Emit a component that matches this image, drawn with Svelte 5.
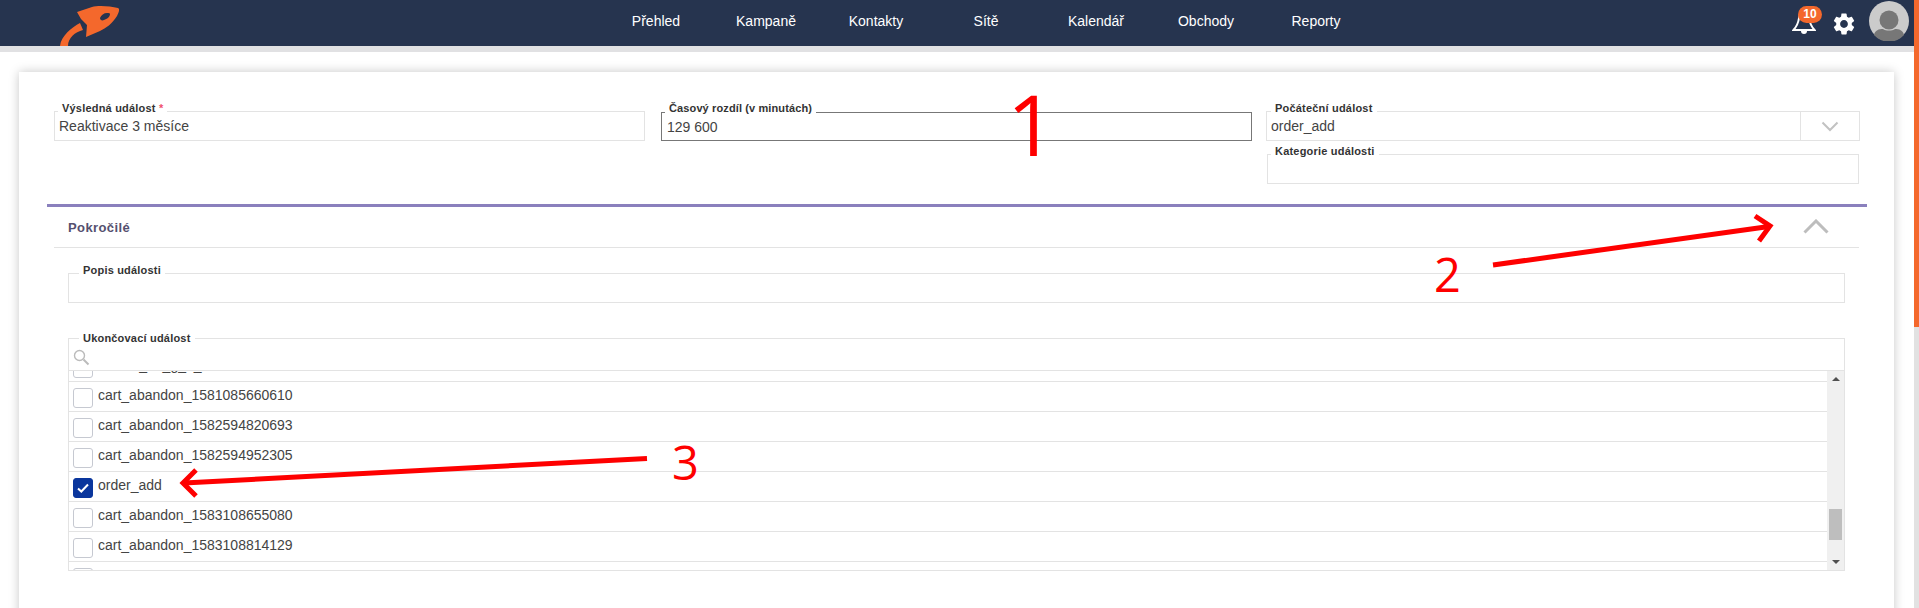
<script>
  const menu = ['Přehled', 'Kampaně', 'Kontakty', 'Sítě', 'Kalendář', 'Obchody', 'Reporty'];

  // first and last rows are scrolled mostly out of view
  const events = [
    { name: 'basket_02_g_2_' },
    { name: 'cart_abandon_1581085660610' },
    { name: 'cart_abandon_1582594820693' },
    { name: 'cart_abandon_1582594952305' },
    { name: 'order_add', checked: true },
    { name: 'cart_abandon_1583108655080' },
    { name: 'cart_abandon_1583108814129' },
    { name: '' }
  ];
</script>

<div class="page">
  <div class="main">
    <header class="nav">
      <a class="logo" href="#top" aria-label="Logo">
        <svg width="60" height="46" viewBox="0 0 60 46">
          <path fill="#f4682c" fill-rule="evenodd" d="M17 12 L32 7 C38 5 50 6 58 8 C60 9 59 12 57 16 C52 24 46 28 40 31 L26 37 L27 25 L21 19 Z M47 13 C44 13 41 15 40 18 C40 20 42 21 44 20 C47 19 50 17 50 14 C50 13 49 13 47 13 Z" />
          <path fill="#f4682c" d="M20 23 C12 27 1 36 0 46 L8 46 C8 38 15 32 23 30 Z" />
        </svg>
      </a>
      <nav class="menu">
        {#each menu as item}
          <a href="#top">{item}</a>
        {/each}
      </nav>
      <div class="tools">
        <div class="bell">
          <svg width="24" height="24" viewBox="0 0 24 24">
            <path fill="none" stroke="#fff" stroke-width="2" d="M1.500 20 C5 16 6.500 12 7 8 C7.500 3 9.500 1 12 1 C14.500 1 16.500 3 17 8 C17.500 12 19 16 22.500 20 Z" />
            <path fill="#fff" d="M9 21 h6 a3 3 0 0 1 -6 0 Z" />
          </svg>
          <span class="badge">10</span>
        </div>
        <svg class="gear" width="26" height="26" viewBox="0 0 24 24">
          <path fill="#fff" d="M19.14 12.94c.04-.3.06-.61.06-.94 0-.32-.02-.64-.07-.94l2.03-1.58a.49.49 0 0 0 .12-.61l-1.92-3.32a.488.488 0 0 0-.59-.22l-2.39.96c-.5-.38-1.03-.7-1.62-.94l-.36-2.54a.484.484 0 0 0-.48-.41h-3.84c-.24 0-.43.17-.47.41l-.36 2.54c-.59.24-1.13.57-1.62.94l-2.39-.96c-.22-.08-.47 0-.59.22L2.74 8.87c-.12.21-.08.47.12.61l2.03 1.58c-.05.3-.09.63-.09.94s.02.64.07.94l-2.03 1.58a.49.49 0 0 0-.12.61l1.92 3.32c.12.22.37.29.59.22l2.39-.96c.5.38 1.03.7 1.62.94l.36 2.54c.05.24.24.41.48.41h3.840c.24 0 .44-.17.47-.41l.36-2.54c.59-.24 1.13-.56 1.62-.94l2.39.96c.22.08.47 0 .59-.22l1.920-3.32c.12-.22.07-.47-.12-.61l-2.01-1.58zM12 15.6c-1.98 0-3.6-1.62-3.6-3.6s1.62-3.6 3.6-3.6 3.6 1.62 3.6 3.6-1.62 3.6-3.6 3.6z" />
        </svg>
        <svg class="avatar" width="40" height="40" viewBox="0 0 40 40">
          <circle cx="20" cy="20" r="20" fill="#cbcbcb" />
          <circle cx="20" cy="19" r="9.500" fill="#777" />
          <path fill="#777" d="M5 34 C6 29 10 28 14 28 C17 30 23 30 26 28 C30 28 34 29 35 34 A20 20 0 0 1 5 34 Z" />
        </svg>
      </div>
    </header>
    <div class="strip"></div>

    <section class="card">
      <div class="top-grid">
        <div class="field first">
          <span class="label">Výsledná událost <i>*</i></span>
          <span class="value">Reaktivace 3 měsíce</span>
        </div>
        <div class="field active">
          <span class="label">Časový rozdíl (v minutách)</span>
          <span class="value">129 600</span>
        </div>
        <div class="right-col">
          <div class="field select">
            <span class="label">Počáteční událost</span>
            <span class="value">order_add</span>
            <span class="select-btn">
              <svg width="18" height="11" viewBox="0 0 18 11">
                <polyline points="1.500,1.500 9,9 16.500,1.500" fill="none" stroke="#c2c2c2" stroke-width="2" />
              </svg>
            </span>
          </div>
          <div class="field small">
            <span class="label">Kategorie události</span>
          </div>
        </div>
      </div>

      <div class="advanced">
        <span class="adv-title">Pokročilé</span>
        <svg class="adv-chevron" width="26" height="15" viewBox="0 0 26 15">
          <polyline points="1.500,13.500 13,2 24.500,13.500" fill="none" stroke="#bdbdbd" stroke-width="3" />
        </svg>
      </div>

      <div class="adv-body">
        <div class="field">
          <span class="label">Popis události</span>
        </div>

        <div class="picker">
          <span class="label">Ukončovací událost</span>
          <div class="search">
            <svg width="17" height="17" viewBox="0 0 17 17">
              <circle cx="6.500" cy="6.500" r="5" fill="none" stroke="#bbb" stroke-width="1.400" />
              <line x1="10.500" y1="10.500" x2="15.500" y2="15.500" stroke="#bbb" stroke-width="2" />
            </svg>
          </div>
          <div class="list-wrap">
            <ul class="list">
              {#each events as ev}
                <li>
                  <span class="box" class:checked={ev.checked}>
                    {#if ev.checked}
                      <svg width="12" height="10" viewBox="0 0 12 10">
                        <polyline points="1,5.500 4.300,8.500 11,1.500" fill="none" stroke="#fff" stroke-width="2" />
                      </svg>
                    {/if}
                  </span>
                  <span class="ev-name">{ev.name}</span>
                </li>
              {/each}
            </ul>
            <div class="scrollbar">
              <span class="arrow up"></span>
              <div class="track"><div class="thumb"></div></div>
              <span class="arrow down"></span>
            </div>
          </div>
        </div>
      </div>
    </section>
  </div>
  <div class="side-bar"></div>

  <!-- hand-drawn annotations on top of the screenshot -->
  <svg class="notes" width="1919" height="608" viewBox="0 0 1919 608">
    <g fill="none" stroke="#fe0000" stroke-width="5">
      <line x1="1493" y1="265" x2="1769" y2="226.500" />
      <polyline points="1755,216 1770,226 1759,241" />
      <line x1="647" y1="458.500" x2="184" y2="483" />
      <polyline points="196,470 183,483 196,496" />
    </g>
    <text x="1007" y="156" class="n1">1</text>
    <text x="1434" y="292" class="n2">2</text>
    <text x="672" y="480" class="n2">3</text>
  </svg>
</div>

<style>
  :global(body) {
    margin: 0;
    background: #fff;
  }

  .page {
    position: relative;
    display: flex;
    width: 1919px;
    height: 608px;
    overflow: hidden;
    font-family: "Liberation Sans", Arial, sans-serif;
    color: #333;
  }

  .main {
    flex: 1;
    min-width: 0;
  }

  .side-bar {
    width: 5px;
    background: linear-gradient(#f4682c 0, #f4682c 327px, #e2e2e2 327px);
  }

  .nav {
    display: flex;
    align-items: center;
    height: 46px;
    background: #26344f;
    overflow: hidden;
  }

  .logo {
    display: block;
    height: 46px;
    margin-left: 60px;
    width: 541px;
  }

  .menu {
    display: flex;
  }

  .menu a {
    width: 110px;
    text-align: center;
    color: #fff;
    font-size: 14px;
    text-decoration: none;
    padding-bottom: 4px;
  }

  .tools {
    display: flex;
    align-items: center;
    margin-left: auto;
    margin-right: 5px;
  }

  .bell {
    position: relative;
    width: 24px;
    height: 24px;
    margin-top: -2px;
    margin-right: 15px;
  }

  .bell svg {
    display: block;
  }

  .badge {
    position: absolute;
    left: 6px;
    top: -4px;
    width: 24px;
    height: 17px;
    border-radius: 9px;
    background: #f4682c;
    color: #fff;
    font-size: 12px;
    font-weight: 700;
    line-height: 17px;
    text-align: center;
  }

  .gear {
    margin-right: 12px;
    margin-top: 1px;
  }

  .avatar {
    margin-top: -4px;
  }

  .strip {
    height: 6px;
    background: #e1e1e3;
  }

  .card {
    margin: 20px 20px 0 19px;
    height: 560px;
    padding: 39px 35px 0;
    background: #fff;
    box-shadow: 0 0 10px rgba(0, 0, 0, 0.22);
  }

  .top-grid {
    display: grid;
    grid-template-columns: repeat(3, 591px);
    gap: 16px;
    align-items: start;
  }

  .right-col {
    display: flex;
    flex-direction: column;
    gap: 13px;
    margin-left: -2px;
  }

  .field {
    position: relative;
    height: 30px;
    box-sizing: border-box;
    border: 1px solid #e3e3e3;
    display: flex;
    align-items: center;
  }

  .field.first .label,
  .field.active .label,
  .field.small .label {
    left: 3px;
  }

  .field.active {
    height: 29px;
    margin-top: 1px;
    border-color: #777;
  }

  .field.active .label {
    top: -12px;
    letter-spacing: 0.12px;
  }

  .field.active .value {
    padding-left: 5px;
  }

  .field.select {
    margin-right: -1px;
  }

  .field.small {
    margin-left: 1px;
  }

  .label {
    position: absolute;
    left: 4px;
    top: -11px;
    padding: 0 4px;
    background: #fff;
    font-size: 11px;
    font-weight: 700;
    letter-spacing: 0.2px;
    line-height: 14px;
    color: #333;
    white-space: nowrap;
  }

  .label i {
    color: #f0506e;
    font-style: normal;
  }

  .value {
    padding-left: 4px;
    font-size: 14px;
    color: #444;
  }

  .select-btn {
    display: flex;
    align-items: center;
    justify-content: center;
    margin-left: auto;
    width: 58px;
    height: 100%;
    border-left: 1px solid #e3e3e3;
  }

  .advanced {
    display: flex;
    align-items: center;
    justify-content: space-between;
    height: 41px;
    margin: 20px -8px 0 -7px;
    padding: 0 0 0 21px;
    border-top: 3px solid #8a80bd;
    position: relative;
  }

  .advanced::after {
    content: "";
    position: absolute;
    left: 7px;
    right: 8px;
    bottom: 0;
    height: 1px;
    background: #e3e3e3;
  }

  .adv-title {
    font-size: 13px;
    font-weight: 700;
    letter-spacing: 0.4px;
    color: #55506f;
  }

  .adv-chevron {
    margin-right: 38px;
    margin-top: -3px;
  }

  .adv-body {
    display: flex;
    flex-direction: column;
    gap: 35px;
    margin: 25px 14px 0 14px;
  }

  .adv-body .label {
    left: 10px;
  }

  .picker {
    position: relative;
    box-sizing: border-box;
    height: 233px;
    border: 1px solid #e3e3e3;
    display: flex;
    flex-direction: column;
  }

  .picker .label {
    top: -8px;
  }

  .search {
    height: 32px;
    box-sizing: border-box;
    flex: none;
    padding: 10px 0 0 4px;
    border-bottom: 1px solid #e3e3e3;
  }

  .search svg {
    display: block;
  }

  .list-wrap {
    display: flex;
    flex: 1;
    min-height: 0;
  }

  .list {
    flex: 1;
    min-width: 0;
    list-style: none;
    margin: 0;
    padding: 0;
    overflow: hidden;
  }

  .list li {
    display: flex;
    align-items: flex-start;
    height: 30px;
    box-sizing: border-box;
    padding: 5px 0 0 4px;
    border-bottom: 1px solid #e3e3e3;
    font-size: 14px;
    color: #444;
  }

  .list li:first-child {
    margin-top: -19px;
  }

  .box {
    flex: none;
    display: flex;
    align-items: center;
    justify-content: center;
    width: 20px;
    height: 20px;
    box-sizing: border-box;
    margin-top: 1px;
    border: 1px solid #c6c9d1;
    border-radius: 3px;
    background: #fff;
  }

  .box.checked {
    background: #0a369d;
    border-color: #0a369d;
  }

  .ev-name {
    margin-left: 5px;
    line-height: 16px;
  }

  .scrollbar {
    flex: none;
    display: flex;
    flex-direction: column;
    align-items: center;
    width: 17px;
    background: #f0f0f0;
  }

  .arrow {
    flex: none;
    width: 0;
    height: 0;
    margin: 6px 0;
    border-left: 4px solid transparent;
    border-right: 4px solid transparent;
  }

  .arrow.up {
    border-bottom: 4px solid #505050;
  }

  .arrow.down {
    border-top: 4px solid #505050;
  }

  .track {
    flex: 1;
    width: 13px;
    display: flex;
    flex-direction: column;
    justify-content: flex-end;
    padding-bottom: 14px;
  }

  .thumb {
    height: 31px;
    background: #bebebe;
  }

  .notes {
    position: absolute;
    left: 0;
    top: 0;
    pointer-events: none;
  }

  .notes text {
    font-family: "Open Sans", "Noto Sans", sans-serif;
    fill: #fe0000;
  }

  .n1 {
    font-size: 85px;
  }

  .n2 {
    font-size: 47px;
  }
</style>
